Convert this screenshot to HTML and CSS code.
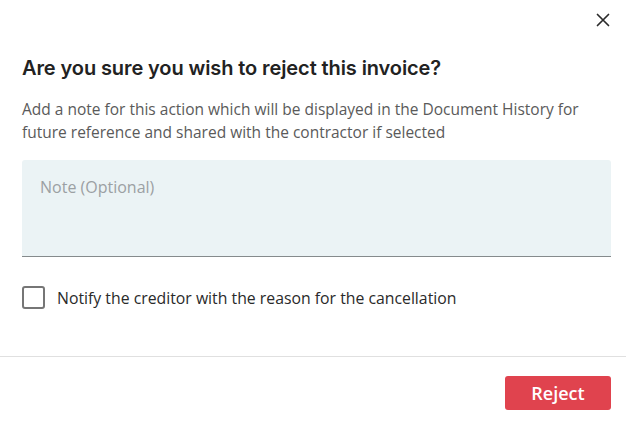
FILE: index.html
```html
<!DOCTYPE html>
<html lang="en">
<head>
<meta charset="utf-8">
<title>Reject invoice</title>
<link rel="stylesheet" href="styles.css">
</head>
<body>
<div class="dialog">
  <div class="dialog-top">
    <button class="close" aria-label="Close">
      <svg width="14" height="14" viewBox="0 0 14 14"><path d="M1.5 1.5 L12.5 12.5 M12.5 1.5 L1.5 12.5" stroke="#2b2b2b" stroke-width="1.7" stroke-linecap="round" fill="none"/></svg>
    </button>
  </div>
  <div class="dialog-body">
    <h2 class="title">Are you sure you wish to reject this invoice?</h2>
    <p class="desc">Add a note for this action which will be displayed in the Document History for future reference and shared with the contractor if selected</p>
    <div class="note">
      <span class="placeholder">Note (Optional)</span>
    </div>
    <label class="check-row">
      <span class="checkbox"></span>
      <span class="check-label">Notify the creditor with the reason for the cancellation</span>
    </label>
  </div>
  <div class="dialog-footer">
    <button class="reject">Reject</button>
  </div>
</div>
</body>
</html>
```
FILE: styles.css
```css
* { box-sizing: border-box; }
html, body { margin: 0; padding: 0; background: #fff; }
body { font-family: "Open Sans", "Noto Sans", sans-serif; color: #333; }
.dialog { width: 626px; height: 423px; display: flex; flex-direction: column; }
.dialog-top { display: flex; justify-content: flex-end; padding: 13px 16px 0 0; height: 56px; }
.close { width: 14px; height: 14px; padding: 0; border: 0; background: none; display: flex; }
.dialog-body { padding: 0 15px 0 22px; }
.title { margin: 0; font-family: Inter, "Liberation Sans", sans-serif; font-weight: 600; font-size: 20px; line-height: 24px; color: #222; letter-spacing: -0.1px; }
.desc { margin: 18px 0 0; font-size: 15.5px; line-height: 23px; color: #5a5a5a; }
.note { margin-top: 16px; height: 97px; background: #ebf3f5; border-bottom: 1px solid #858a8c; border-radius: 3px 3px 0 0; padding: 16px 18px; }
.placeholder { font-size: 16px; line-height: 20px; color: #9ba0a3; }
.check-row { display: flex; align-items: center; gap: 12px; margin-top: 29px; }
.checkbox { width: 23px; height: 23px; border: 2px solid #767676; border-radius: 3px; flex: none; }
.check-label { font-size: 15.8px; line-height: 22px; color: #2a2a2a; }
.dialog-footer { margin-top: 47px; border-top: 1px solid #e0e0e0; padding: 19px 15px 0 0; display: flex; justify-content: flex-end; }
.reject { width: 106px; height: 34px; border: 0; border-radius: 3px; background: #e0434e; color: #fff; font-family: "Open Sans", "Noto Sans", sans-serif; font-weight: 600; font-size: 18px; padding: 0; }
```
